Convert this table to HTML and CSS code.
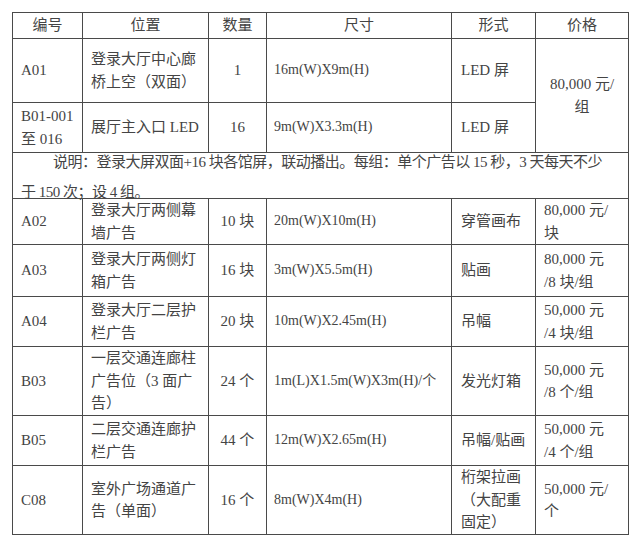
FILE: index.html
```html
<!DOCTYPE html>
<html lang="zh">
<head>
<meta charset="utf-8">
<title>广告位价格表</title>
<link rel="stylesheet" href="styles.css">
</head>
<body>
<div class="page">
<table class="grid">
  <colgroup>
    <col class="c-code"><col class="c-place"><col class="c-qty"><col class="c-size"><col class="c-form"><col class="c-price">
  </colgroup>
  <tr class="r-head">
    <th>编号</th><th>位置</th><th>数量</th><th>尺寸</th><th>形式</th><th>价格</th>
  </tr>
  <tr class="r-a01">
    <td>A01</td>
    <td>登录大厅中心廊<br>桥上空（双面）</td>
    <td class="qty">1</td>
    <td class="size">16m(W)X9m(H)</td>
    <td class="form">LED 屏</td>
    <td class="price center" rowspan="2">80,000 元/<br>组</td>
  </tr>
  <tr class="r-b01">
    <td>B01-001<br>至 016</td>
    <td>展厅主入口 LED</td>
    <td class="qty">16</td>
    <td class="size">9m(W)X3.3m(H)</td>
    <td class="form">LED 屏</td>
  </tr>
  <tr class="r-note">
    <td colspan="6" class="note"><div class="note-text">说明：登录大屏双面+16 块各馆屏，联动播出。每组：单个广告以 15 秒，3 天每天不少<br>于 150 次；设 4 组。</div></td>
  </tr>
  <tr class="r-a02">
    <td>A02</td>
    <td>登录大厅两侧幕<br>墙广告</td>
    <td class="qty">10 块</td>
    <td class="size">20m(W)X10m(H)</td>
    <td class="form">穿管画布</td>
    <td class="price">80,000 元/<br>块</td>
  </tr>
  <tr class="r-a03">
    <td>A03</td>
    <td>登录大厅两侧灯<br>箱广告</td>
    <td class="qty">16 块</td>
    <td class="size">3m(W)X5.5m(H)</td>
    <td class="form">贴画</td>
    <td class="price">80,000 元<br>/8 块/组</td>
  </tr>
  <tr class="r-a04">
    <td>A04</td>
    <td>登录大厅二层护<br>栏广告</td>
    <td class="qty">20 块</td>
    <td class="size">10m(W)X2.45m(H)</td>
    <td class="form">吊幅</td>
    <td class="price">50,000 元<br>/4 块/组</td>
  </tr>
  <tr class="r-b03">
    <td>B03</td>
    <td>一层交通连廊柱<br>广告位（3 面广<br>告）</td>
    <td class="qty">24 个</td>
    <td class="size">1m(L)X1.5m(W)X3m(H)/个</td>
    <td class="form">发光灯箱</td>
    <td class="price">50,000 元<br>/8 个/组</td>
  </tr>
  <tr class="r-b05">
    <td>B05</td>
    <td>二层交通连廊护<br>栏广告</td>
    <td class="qty">44 个</td>
    <td class="size">12m(W)X2.65m(H)</td>
    <td class="form">吊幅/贴画</td>
    <td class="price">50,000 元<br>/4 个/组</td>
  </tr>
  <tr class="r-c08">
    <td>C08</td>
    <td>室外广场通道广<br>告（单面）</td>
    <td class="qty">16 个</td>
    <td class="size">8m(W)X4m(H)</td>
    <td class="form">桁架拉画<br>（大配重<br>固定）</td>
    <td class="price">50,000 元/<br>个</td>
  </tr>
</table>
</div>
</body>
</html>
```
FILE: styles.css
```css
html, body {
  margin: 0;
  padding: 0;
  background: #ffffff;
}
.page {
  padding: 12px 0 0 12px;
}
.grid {
  border-collapse: collapse;
  table-layout: fixed;
  width: 616px;
  font-family: "Liberation Serif", "Noto Sans CJK SC", serif;
  font-size: 15px;
  line-height: 22.5px;
  color: #444444;
}
.c-code { width: 70px; }
.c-place { width: 126px; }
.c-qty { width: 58px; }
.c-size { width: 185px; }
.c-form { width: 84px; }
.c-price { width: 93px; }

.grid th,
.grid td {
  border: 1px solid #4a4a4a;
  padding: 0 8px;
  vertical-align: middle;
  text-align: left;
  white-space: nowrap;
  font-weight: normal;
}
.grid th {
  text-align: center;
}
.grid td.qty { text-align: center; padding: 0 4px; }
.grid td.size { font-size: 14px; padding-left: 7px; padding-right: 2px; }
.grid td.form { padding-left: 9px; padding-right: 2px; }
.grid td.price { padding-right: 2px; }
.grid td.center { text-align: center; padding: 0 4px; }

.r-head { height: 26px; }
.r-a01 { height: 64px; }
.r-b01 { height: 50px; }
.r-note { height: 46px; }
.r-a02 { height: 45px; }
.r-a03 { height: 52px; }
.r-a04 { height: 50px; }
.r-b03 { height: 69px; }
.r-b05 { height: 50px; }
.r-c08 { height: 69px; }

.grid td.note {
  vertical-align: top;
  padding: 0 4px 0 8px;
}
.note-text {
  height: 46px;
  margin-top: -6px;
  line-height: 30px;
  text-indent: 32px;
  letter-spacing: -0.5px;
}
```
